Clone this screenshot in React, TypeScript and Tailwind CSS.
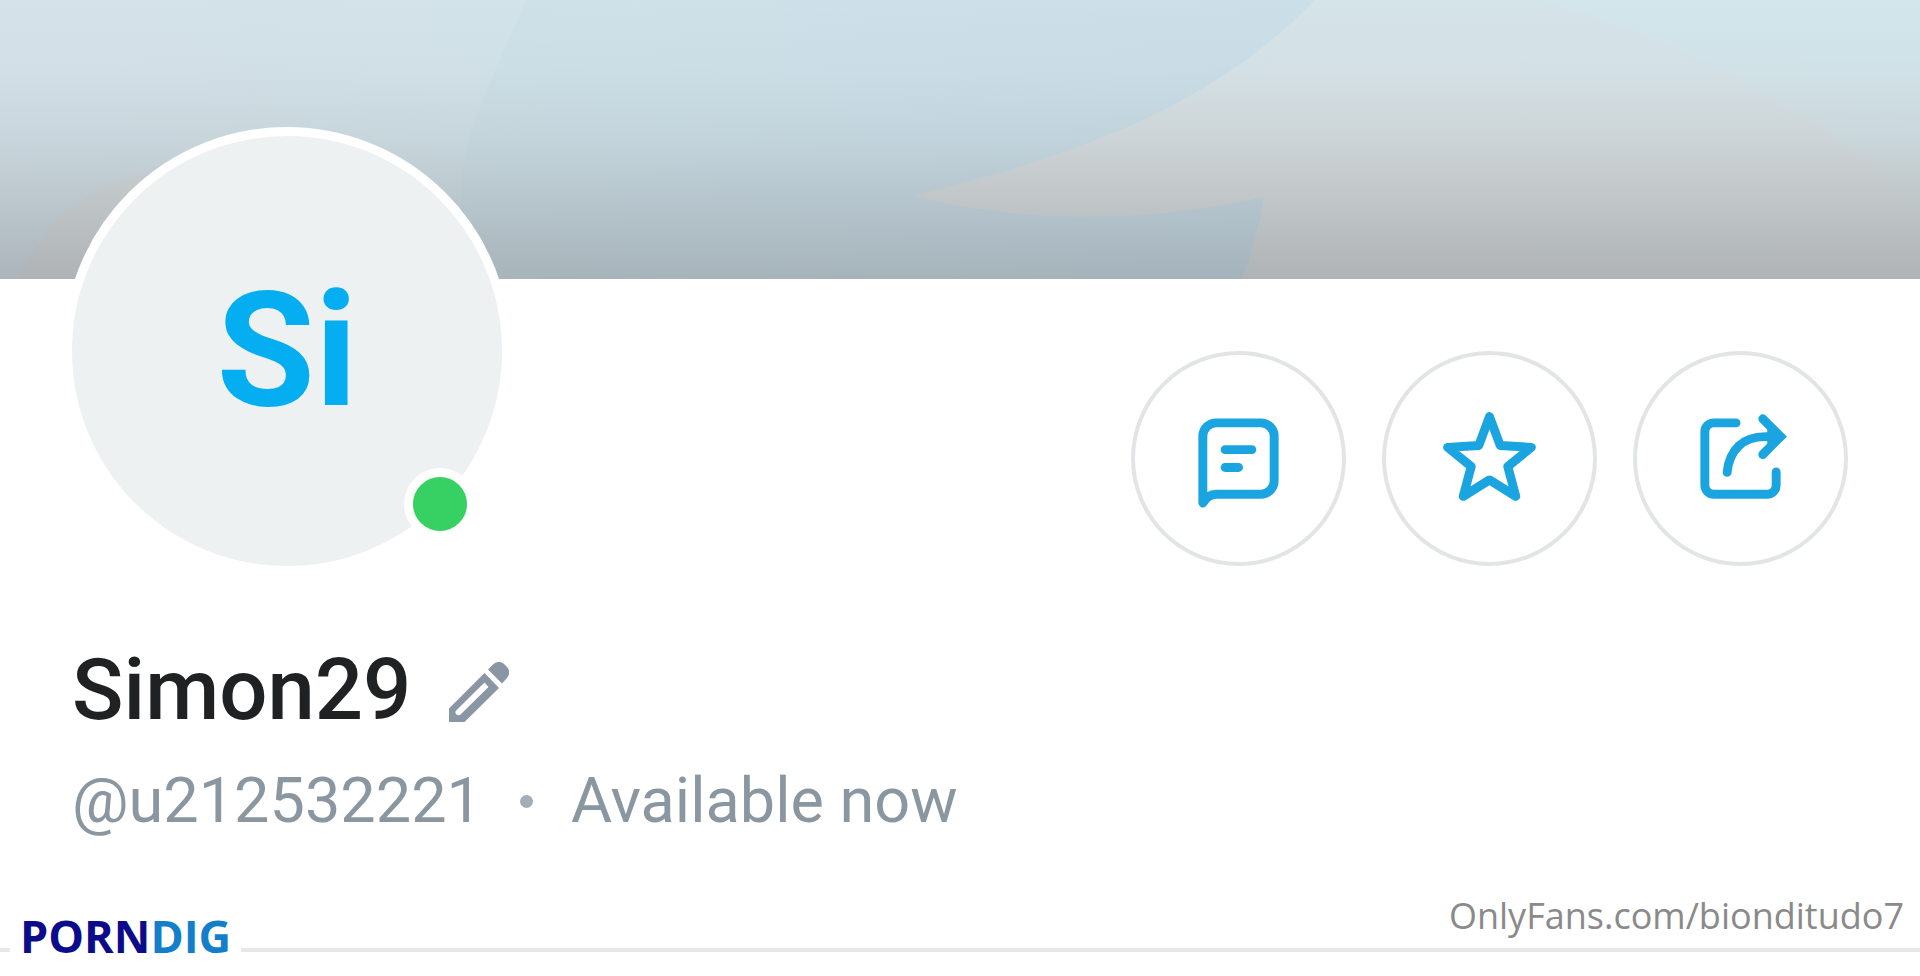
import React from "react";

interface ActionButtonProps {
  label: string;
  children: React.ReactNode;
}

const ActionButton = ({ label, children }: ActionButtonProps) => {
  return (
    <button
      type="button"
      aria-label={label}
      className="flex size-[215px] items-center justify-center rounded-full border-4 border-[#e2e4e5] bg-white text-[#1ba5e0]"
    >
      <svg
        viewBox="0 0 24 24"
        fill="none"
        stroke="currentColor"
        strokeWidth="2"
        strokeLinecap="round"
        strokeLinejoin="round"
        className="size-[107px]"
      >
        {children}
      </svg>
    </button>
  );
};

const Banner = () => {
  return (
    <svg
      viewBox="0 0 1920 279"
      preserveAspectRatio="none"
      aria-hidden="true"
      className="block h-[279px] w-full"
    >
      <defs>
        <linearGradient id="shade" x1="0" y1="0" x2="0" y2="1">
          <stop offset="0" stopColor="#404044" stopOpacity="0" />
          <stop offset="0.25" stopColor="#404044" stopOpacity="0.02" />
          <stop offset="0.5" stopColor="#404044" stopOpacity="0.08" />
          <stop offset="0.75" stopColor="#404044" stopOpacity="0.18" />
          <stop offset="1" stopColor="#404044" stopOpacity="0.28" />
        </linearGradient>
        <linearGradient id="wing" x1="0" y1="0" x2="0" y2="1">
          <stop offset="0" stopColor="#d5e4e9" />
          <stop offset="0.3" stopColor="#d7e3e7" />
          <stop offset="0.6" stopColor="#dae0e2" />
          <stop offset="1" stopColor="#dae0e1" />
        </linearGradient>
        <linearGradient id="sky" x1="0" y1="0" x2="1" y2="0">
          <stop offset="0" stopColor="#cfe1e8" />
          <stop offset="1" stopColor="#cbdfe9" />
        </linearGradient>
        <linearGradient id="glow" x1="0.4" y1="1" x2="0.6" y2="0">
          <stop offset="0" stopColor="#d2e6ec" stopOpacity="0" />
          <stop offset="0.5" stopColor="#d2e6ec" stopOpacity="0.5" />
          <stop offset="1" stopColor="#d2e6ec" />
        </linearGradient>
        <linearGradient id="base" x1="0" y1="0" x2="1" y2="0">
          <stop offset="0" stopColor="#d5e2e9" />
          <stop offset="0.26" stopColor="#d2e3e9" />
        </linearGradient>
      </defs>
      <rect width="1920" height="279" fill="url(#base)" />
      <path
        d="M526 0C500 60 478 105 469 140C463 165 461 180 461 200V279H1340V0Z"
        fill="url(#sky)"
      />
      <path
        d="M1315 0C1220 98 1100 150 913 196C1030 225 1150 222 1264 197C1260 225 1252 252 1242 279H1920V0Z"
        fill="url(#wing)"
      />
      <path d="M1540 0C1680 40 1800 100 1920 205V0Z" fill="url(#glow)" />
      <path
        d="M20 279C45 220 85 185 150 170L260 279Z"
        fill="#dcdddc"
        fillOpacity="0.6"
      />
      <rect width="1920" height="279" fill="url(#shade)" />
    </svg>
  );
};

const Avatar = () => {
  return (
    <div className="relative -mt-[152px] flex size-[448px] items-center justify-center rounded-full border-[9px] border-white bg-[#eef1f2]">
      <span className="text-[160px] leading-none font-bold text-[#05aef0]">
        Si
      </span>
      <span className="absolute right-[26px] bottom-[26px] size-[72px] rounded-full border-[9px] border-white bg-[#36d162]" />
    </div>
  );
};

const PencilIcon = () => {
  return (
    <svg viewBox="0 0 60 60" fill="currentColor" className="size-[60px]">
      <path
        fillRule="evenodd"
        d="M0 46.5L35.500 11L50 26L15.500 60H0ZM35.500 20.500L7.200 48.500C6 49.800 6.200 51 7.200 52.200C8.500 53.600 10.200 53.600 11.500 52.400L39.500 25Z"
      />
      <path d="M39 7.500L44 2.500C47.500 -.8 52 -.8 55 2L58 5C61 8 60.800 12.500 58 16L53 21.500Z" />
    </svg>
  );
};

const App = () => {
  return (
    <div className="flex min-h-screen flex-col bg-white font-[Roboto,sans-serif]">
      <Banner />

      <div className="flex items-end justify-between pr-[72px] pl-[63px]">
        <Avatar />
        <div className="flex gap-9 pb-[9px]">
          <ActionButton label="Message">
            <path d="M4 22V7a3 3 0 0 1 3-3h10a3 3 0 0 1 3 3v10a3 3 0 0 1-3 3H7C5.500 20 4.700 20.700 4 22Z" />
            <path d="M9 10h6M9 14h3" />
          </ActionButton>
          <ActionButton label="Add to favorites">
            <path d="M12 2.600L14.400 9.100L21.400 9.500L16.100 13.800L17.900 20.500L12 16.800L6.100 20.500L7.900 13.800L2.600 9.500L9.600 9.100Z" />
          </ActionButton>
          <ActionButton label="Share">
            <path d="M11 4H6a2 2 0 0 0-2 2v12a2 2 0 0 0 2 2h12a2 2 0 0 0 2-2v-3" />
            <path d="M9 15.100C9.500 10 12.600 7.100 17.500 7.100H20.500" />
            <path d="M17 3.100L21 7.100L17 11.100" strokeLinejoin="miter" />
            <path d="M18 5L20.500 7.100L18 9.200Z" fill="currentColor" stroke="none" />
          </ActionButton>
        </div>
      </div>

      <div className="mt-[67px] flex items-end gap-[38px] px-[72px]">
        <h1 className="text-[85px] leading-[96px] font-medium text-[#1f2123]">
          Simon29
        </h1>
        <button
          type="button"
          aria-label="Edit name"
          className="pb-4 text-[#8a96a3]"
        >
          <PencilIcon />
        </button>
      </div>

      <div className="mt-[27px] flex items-center px-[72px] text-[63px] leading-[72px] text-[#8a96a0]">
        <span>@u212532221</span>
        <span className="mx-[38px] size-[13px] rounded-full bg-[#a5aeb8]" />
        <span>Available now</span>
      </div>

      <div className="mt-[55px] flex items-end font-['Open_Sans',sans-serif]">
        <div className="mb-2 h-1 w-2.5 bg-[#e8e8e8]" />
        <a
          href="#"
          className="px-2.5 text-[45px] leading-[48px] font-bold text-[#0b0b8c]"
        >
          PORN<span className="text-[#137fcb]">DIG</span>
        </a>
        <div className="mb-2 flex-1">
          <p className="pr-4 text-right text-[36px] leading-[48px] text-[#8a8a8a]">
            OnlyFans.com/bionditudo7
          </p>
          <div className="mt-2 h-1 bg-[#e8e8e8]" />
        </div>
      </div>
    </div>
  );
};

export default App;
